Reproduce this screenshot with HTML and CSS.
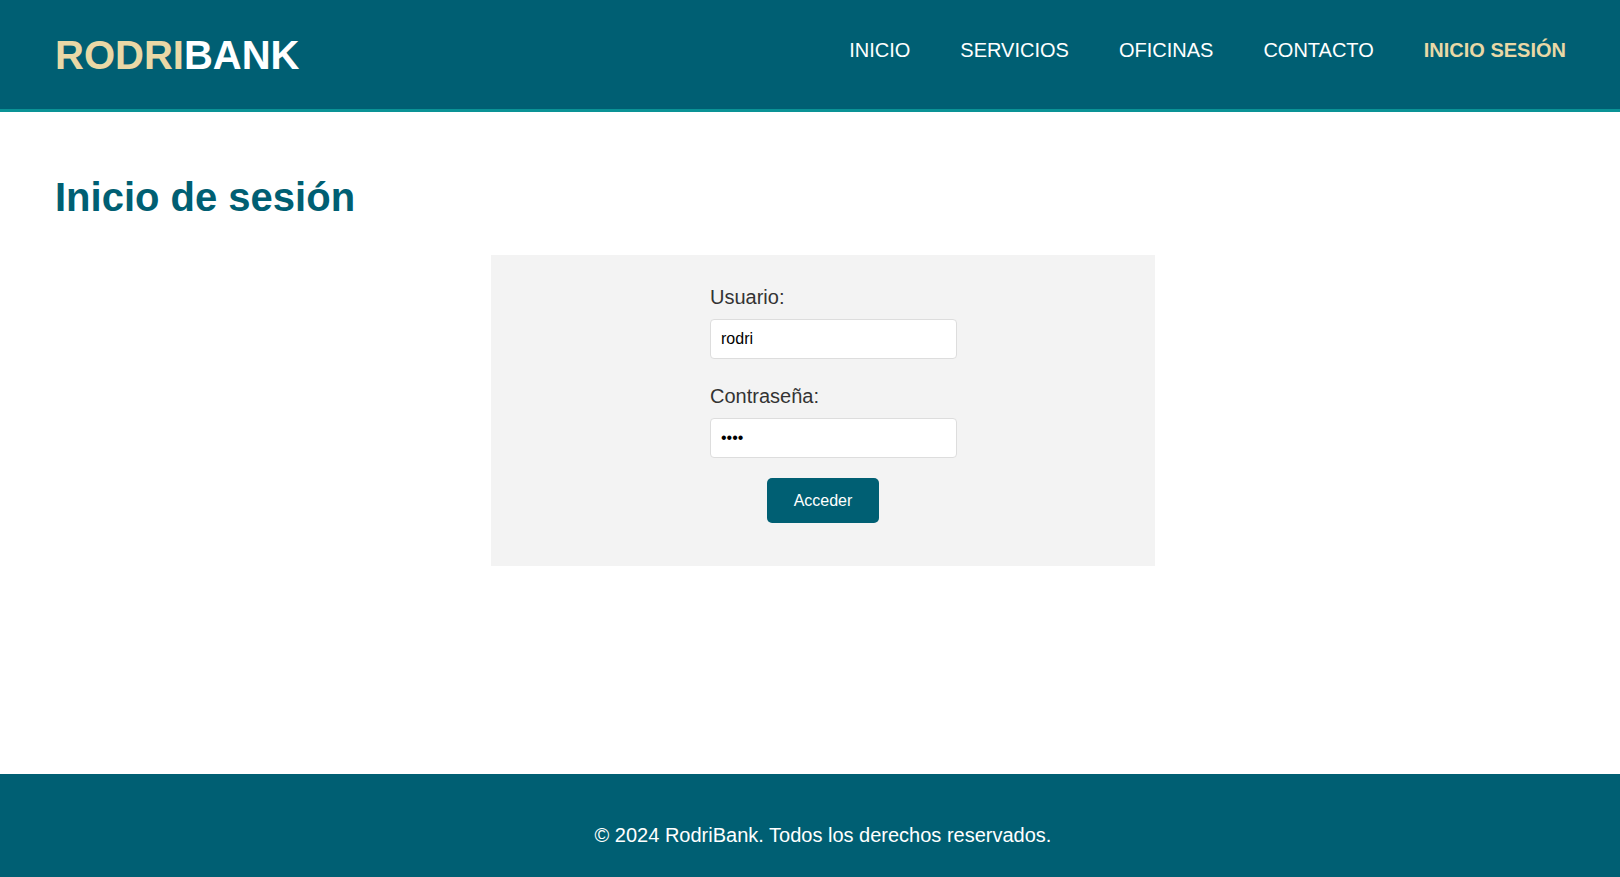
FILE: index.html
```html
<!DOCTYPE html>
<html lang="es">
<head>
<meta charset="utf-8">
<title>RodriBank - Inicio de sesión</title>
<link rel="stylesheet" href="styles.css">
</head>
<body>
<header class="site-header">
  <div class="logo"><span class="logo-a">RODRI</span><span class="logo-b">BANK</span></div>
  <nav class="main-nav">
    <ul>
      <li><a href="#">INICIO</a></li>
      <li><a href="#">SERVICIOS</a></li>
      <li><a href="#">OFICINAS</a></li>
      <li><a href="#">CONTACTO</a></li>
      <li><a href="#" class="active">INICIO SESIÓN</a></li>
    </ul>
  </nav>
</header>
<main class="content">
  <h1 class="page-title">Inicio de sesión</h1>
  <div class="login-wrap">
    <form class="login-box">
      <div class="fields">
        <label class="field-label" for="u">Usuario:</label>
        <input class="field-input" id="u" type="text" value="rodri">
        <label class="field-label second" for="p">Contraseña:</label>
        <input class="field-input" id="p" type="password" value="1234">
      </div>
      <button class="btn" type="button">Acceder</button>
    </form>
  </div>
</main>
<footer class="site-footer">
  <p>© 2024 RodriBank. Todos los derechos reservados.</p>
</footer>
</body>
</html>
```
FILE: styles.css
```css
* { box-sizing: border-box; }
html, body { margin: 0; padding: 0; }
body {
  font-family: "Liberation Sans", Arial, sans-serif;
  min-height: 100vh;
  display: flex;
  flex-direction: column;
  background: #ffffff;
  color: #333333;
}
.site-header {
  height: 112px;
  background: #005f73;
  border-bottom: 3px solid #0a9396;
  display: flex;
  align-items: center;
  justify-content: space-between;
  padding: 0 54px 0 55px;
}
.logo {
  font-size: 40px;
  font-weight: bold;
  line-height: 46px;
}
.logo-a { color: #e9d8a6; }
.logo-b { color: #ffffff; }
.main-nav { margin-bottom: 8px; }
.main-nav ul {
  list-style: none;
  margin: 0;
  padding: 0;
  display: flex;
  gap: 50px;
}
.main-nav a {
  color: #ffffff;
  text-decoration: none;
  font-size: 20px;
  line-height: 23px;
}
.main-nav a.active {
  color: #e9d8a6;
  font-weight: bold;
}
.content {
  flex: 1;
  padding: 0 55px;
}
.page-title {
  margin: 62px 0 35px;
  font-size: 40px;
  line-height: 46px;
  color: #005f73;
  font-weight: bold;
}
.login-wrap {
  display: flex;
  justify-content: center;
  padding-left: 26px;
}
.login-box {
  width: 664px;
  background: #f3f3f3;
  padding: 31px 0 43px;
  display: flex;
  flex-direction: column;
  align-items: center;
}
.fields {
  width: 226px;
  display: flex;
  flex-direction: column;
  align-items: flex-start;
}
.field-label {
  font-size: 20px;
  line-height: 23px;
  color: #333333;
  margin-bottom: 10px;
}
.field-label.second { margin-top: 26px; }
.field-input {
  box-sizing: content-box;
  width: 225px;
  height: 18px;
  padding: 10px;
  border: 1px solid #dddddd;
  border-radius: 4px;
  background: #ffffff;
  font-family: "Liberation Sans", Arial, sans-serif;
  font-size: 16px;
  line-height: 18px;
  color: #000000;
  outline: none;
}
.btn {
  margin-top: 20px;
  width: 112px;
  height: 45px;
  padding: 0;
  border: none;
  border-radius: 5px;
  background: #005f73;
  color: #ffffff;
  font-family: "Liberation Sans", Arial, sans-serif;
  font-size: 16px;
  line-height: 19px;
}
.site-footer {
  background: #005f73;
  color: #ffffff;
  text-align: center;
  padding: 50px 0 30px 26px;
}
.site-footer p {
  margin: 0;
  font-size: 20px;
  line-height: 23px;
}
```
